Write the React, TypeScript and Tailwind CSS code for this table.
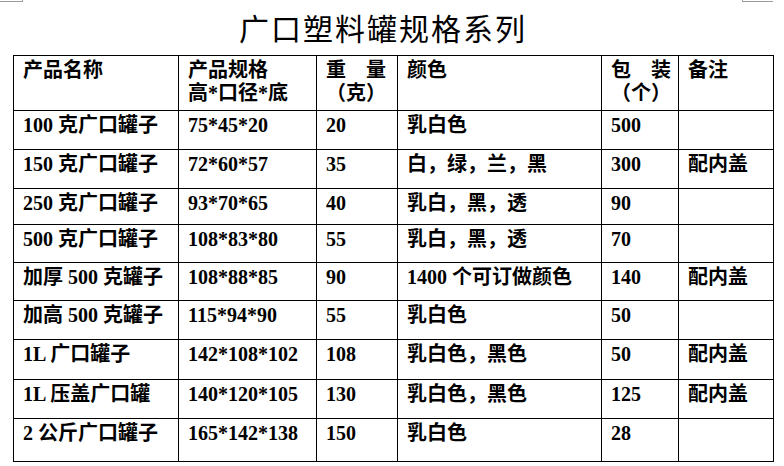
import React from 'react';

type Row = {
  name: string;
  spec: string;
  weight: string;
  color: string;
  pack: string;
  note: string;
  h: string;
};

const rows: Row[] = [
  { name: '100 克广口罐子', spec: '75*45*20', weight: '20', color: '乳白色', pack: '500', note: '', h: 'h-[39px]' },
  { name: '150 克广口罐子', spec: '72*60*57', weight: '35', color: '白，绿，兰，黑', pack: '300', note: '配内盖', h: 'h-[39px]' },
  { name: '250 克广口罐子', spec: '93*70*65', weight: '40', color: '乳白，黑，透', pack: '90', note: '', h: 'h-[36px]' },
  { name: '500 克广口罐子', spec: '108*83*80', weight: '55', color: '乳白，黑，透', pack: '70', note: '', h: 'h-[38px]' },
  { name: '加厚 500 克罐子', spec: '108*88*85', weight: '90', color: '1400 个可订做颜色', pack: '140', note: '配内盖', h: 'h-[38px]' },
  { name: '加高 500 克罐子', spec: '115*94*90', weight: '55', color: '乳白色', pack: '50', note: '', h: 'h-[39px]' },
  { name: '1L 广口罐子', spec: '142*108*102', weight: '108', color: '乳白色，黑色', pack: '50', note: '配内盖', h: 'h-[40px]' },
  { name: '1L 压盖广口罐', spec: '140*120*105', weight: '130', color: '乳白色，黑色', pack: '125', note: '配内盖', h: 'h-[39px]' },
  { name: '2 公斤广口罐子', spec: '165*142*138', weight: '150', color: '乳白色', pack: '28', note: '', h: 'h-[43px]' },
];

const cell = 'border border-black align-top pl-[9px] pt-[3px] leading-[23px] whitespace-nowrap';

export default function App() {
  return (
    <div className="w-[784px] h-[466px] bg-white text-black overflow-hidden font-['Liberation_Serif','Noto_Sans_CJK_SC',serif]">
      {/* page corner marks */}
      <div className="flex justify-between h-[3px]">
        <div className="w-[23px] h-[2px] border-b border-r border-[#9a9a9a]" />
        <div className="w-[31px] h-[2px] mr-[11px] border-b border-l border-[#9a9a9a]" />
      </div>

      <h1 className="h-[52px] pt-[4px] pr-[18px] text-center text-[30px] leading-[40px] tracking-[2px] font-normal font-['Noto_Sans_CJK_SC',sans-serif]">
        广口塑料罐规格系列
      </h1>

      <table className="ml-[13px] w-[760px] table-fixed border-collapse text-[20px] font-bold">
        <colgroup>
          <col className="w-[165px]" />
          <col className="w-[138px]" />
          <col className="w-[81px]" />
          <col className="w-[204px]" />
          <col className="w-[77px]" />
          <col className="w-[95px]" />
        </colgroup>
        <thead>
          <tr className="h-[55px]">
            <th className={`${cell} text-left font-bold`}>产品名称</th>
            <th className={`${cell} text-left font-bold`}>
              产品规格
              <br />
              高*口径*底
            </th>
            <th className={`${cell} text-left font-bold`}>
              重　量
              <br />
              （克）
            </th>
            <th className={`${cell} text-left font-bold`}>颜色</th>
            <th className={`${cell} text-left font-bold`}>
              包　装
              <br />
              （个）
            </th>
            <th className={`${cell} text-left font-bold`}>备注</th>
          </tr>
        </thead>
        <tbody>
          {rows.map((r) => (
            <tr key={r.name} className={r.h}>
              <td className={cell}>{r.name}</td>
              <td className={cell}>{r.spec}</td>
              <td className={cell}>{r.weight}</td>
              <td className={cell}>{r.color}</td>
              <td className={cell}>{r.pack}</td>
              <td className={cell}>{r.note}</td>
            </tr>
          ))}
        </tbody>
      </table>
    </div>
  );
}
